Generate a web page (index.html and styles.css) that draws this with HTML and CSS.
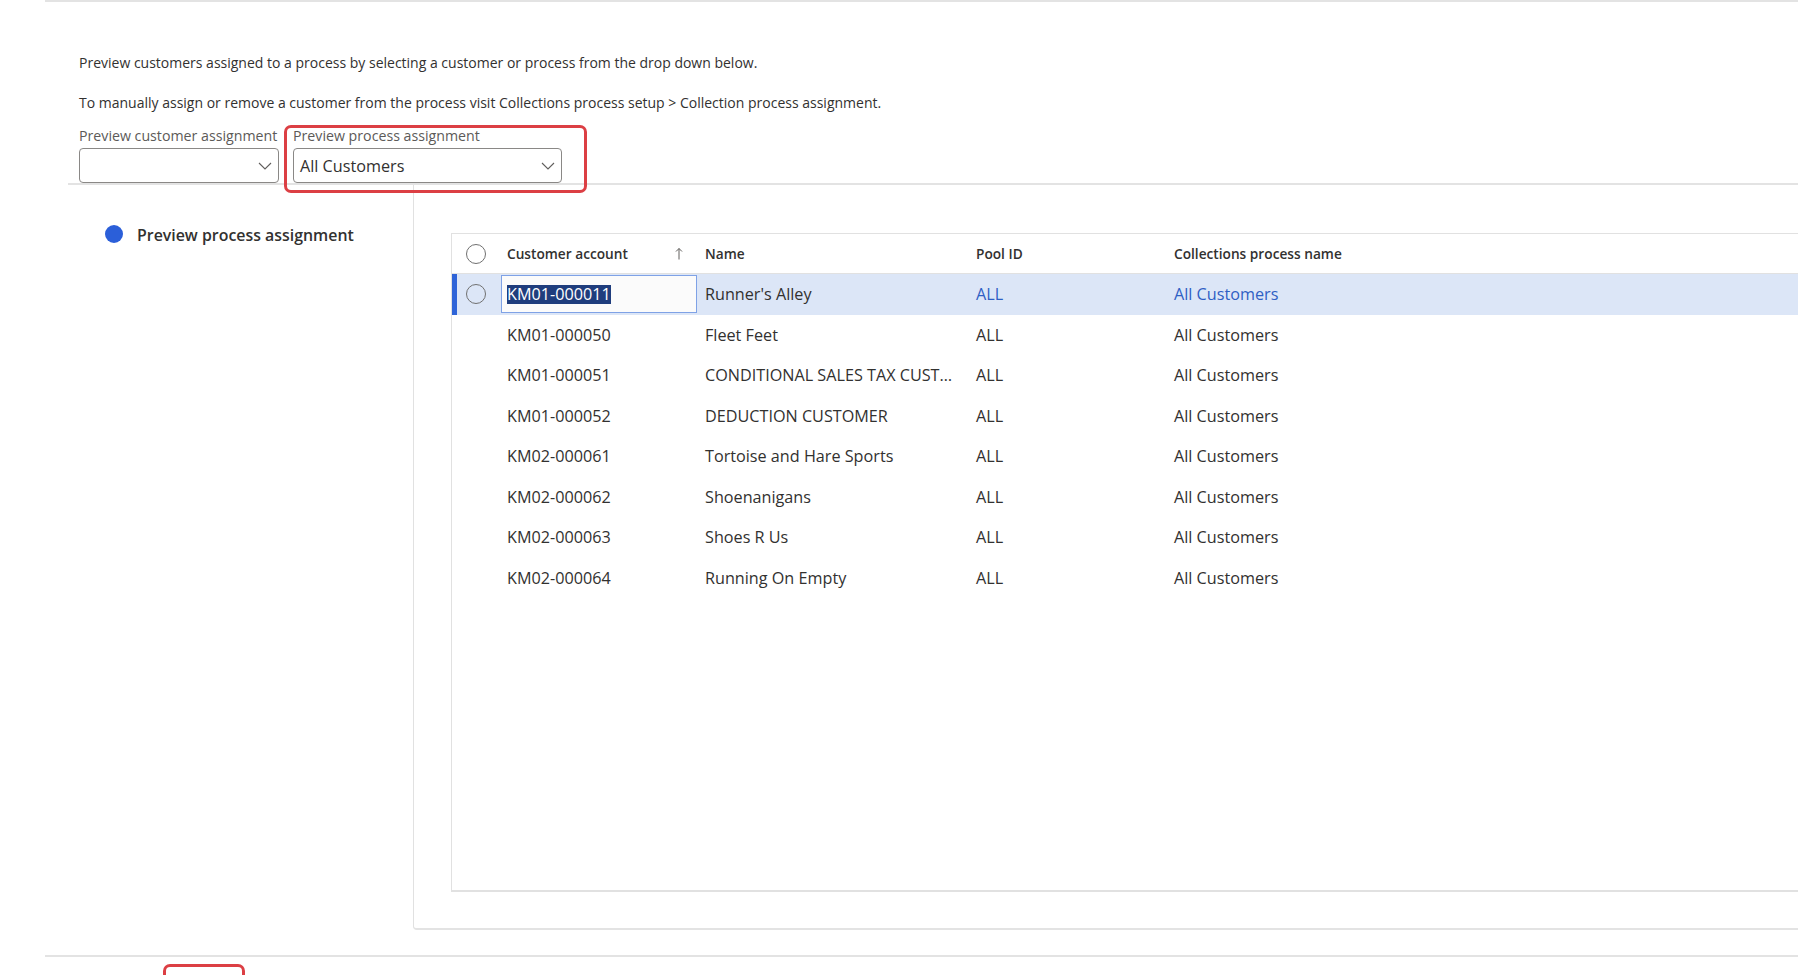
FILE: index.html
```html
<!DOCTYPE html>
<html lang="en">
<head>
  <meta charset="UTF-8" />
  <title>Collections process assignment</title>
  <link rel="stylesheet" href="styles.css">
</head>
<body>
  <div class="page">
    <section class="intro">
      <p>Preview customers assigned to a process by selecting a customer or process from the drop down below.</p>
      <p class="second">To manually assign or remove a customer from the process visit Collections process setup &gt; Collection process assignment.</p>

      <div class="filters">
        <div class="field field-customer">
          <label>Preview customer assignment</label>
          <div class="select">
            <span></span>
            <svg class="chevron" width="14" height="8" viewBox="0 0 14 8"><polyline points="1,1 7,7 13,1" fill="none" stroke="#605e5c" stroke-width="1.1"/></svg>
          </div>
        </div>
        <div class="field field-process highlighted">
          <label>Preview process assignment</label>
          <div class="select">
            <span>All Customers</span>
            <svg class="chevron" width="14" height="8" viewBox="0 0 14 8"><polyline points="1,1 7,7 13,1" fill="none" stroke="#605e5c" stroke-width="1.1"/></svg>
          </div>
        </div>
      </div>
    </section>

    <div class="workspace">
      <aside class="steps">
        <div class="step"><span class="dot"></span>Preview process assignment</div>
      </aside>

      <section class="panel">
        <div class="grid">
          <div class="row head">
            <div class="cell check"><span class="radio"></span></div>
            <div class="cell account">Customer account
              <svg class="sort" width="8" height="13" viewBox="0 0 8 13"><path d="M4 1.5V12.5M1 4.5L4 1.5L7 4.5" fill="none" stroke="#605e5c" stroke-width="1"/></svg>
            </div>
            <div class="cell name">Name</div>
            <div class="cell pool">Pool ID</div>
            <div class="cell process">Collections process name</div>
          </div>

          <div class="row selected">
            <div class="cell check"><span class="radio"></span></div>
            <div class="cell account"><div class="edit"><span class="mark">KM01-000011</span></div></div>
            <div class="cell name">Runner's Alley</div>
            <div class="cell pool link">ALL</div>
            <div class="cell process link">All Customers</div>
          </div>
          <div class="row">
            <div class="cell check"></div>
            <div class="cell account">KM01-000050</div>
            <div class="cell name">Fleet Feet</div>
            <div class="cell pool">ALL</div>
            <div class="cell process">All Customers</div>
          </div>
          <div class="row">
            <div class="cell check"></div>
            <div class="cell account">KM01-000051</div>
            <div class="cell name">CONDITIONAL SALES TAX CUSTOMER</div>
            <div class="cell pool">ALL</div>
            <div class="cell process">All Customers</div>
          </div>
          <div class="row">
            <div class="cell check"></div>
            <div class="cell account">KM01-000052</div>
            <div class="cell name">DEDUCTION CUSTOMER</div>
            <div class="cell pool">ALL</div>
            <div class="cell process">All Customers</div>
          </div>
          <div class="row">
            <div class="cell check"></div>
            <div class="cell account">KM02-000061</div>
            <div class="cell name">Tortoise and Hare Sports</div>
            <div class="cell pool">ALL</div>
            <div class="cell process">All Customers</div>
          </div>
          <div class="row">
            <div class="cell check"></div>
            <div class="cell account">KM02-000062</div>
            <div class="cell name">Shoenanigans</div>
            <div class="cell pool">ALL</div>
            <div class="cell process">All Customers</div>
          </div>
          <div class="row">
            <div class="cell check"></div>
            <div class="cell account">KM02-000063</div>
            <div class="cell name">Shoes R Us</div>
            <div class="cell pool">ALL</div>
            <div class="cell process">All Customers</div>
          </div>
          <div class="row">
            <div class="cell check"></div>
            <div class="cell account">KM02-000064</div>
            <div class="cell name">Running On Empty</div>
            <div class="cell pool">ALL</div>
            <div class="cell process">All Customers</div>
          </div>
        </div>
      </section>
    </div>

    <footer class="footer">
      <div class="footer-mark"></div>
    </footer>
  </div>
</body>
</html>
```

FILE: styles.css
```css
/* Base */
body {
  margin: 0;
  font-family: 'Open Sans', 'Noto Sans', sans-serif;
  color: #323130;
  background-color: #ffffff;
  overflow: hidden;
}

.page {
  margin-left: 45px;
  border-top: 2px solid #e3e3e3;
}

/* Intro + filters */
.intro {
  padding: 51px 0 0 34px;
}

.intro p {
  margin: 0;
  font-size: 14px;
  line-height: 20px;
  color: #323130;
  white-space: nowrap;
}

.intro p.second {
  margin-top: 20px;
}

.filters {
  display: flex;
  gap: 14px;
  margin-top: 14px;
}

.field {
  display: flex;
  flex-direction: column;
  gap: 3px;
}

.field label {
  font-size: 14.2px;
  line-height: 18px;
  color: #5c5a58;
  white-space: nowrap;
}

.field-customer .select {
  width: 200px;
}

.field-process .select {
  width: 269px;
}

.highlighted {
  position: relative;
}

.highlighted::after {
  content: '';
  position: absolute;
  top: -2px;
  left: -9px;
  right: -25px;
  bottom: -10px;
  border: 3px solid #dc3f44;
  border-radius: 7px;
}

.select {
  box-sizing: border-box;
  height: 35px;
  border: 1px solid #8a8886;
  border-radius: 4px;
  display: flex;
  align-items: center;
  justify-content: space-between;
  padding: 0 6px 0 6px;
  font-size: 16.2px;
  color: #323130;
}

/* Workspace */
.workspace {
  display: flex;
  margin-left: 23px;
  border-top: 2px solid #e3e3e3;
}

.steps {
  width: 345px;
  padding: 41px 0 0 37px;
  box-sizing: border-box;
}

.step {
  display: flex;
  align-items: center;
  gap: 14px;
  font-size: 15.9px;
  font-weight: 600;
  color: #323130;
  height: 18px;
  white-space: nowrap;
}

.step .dot {
  margin-top: -2px;
}

.dot {
  flex: none;
  width: 18px;
  height: 18px;
  border-radius: 50%;
  background-color: #2b5fd9;
}

.panel {
  flex: 1;
  border-left: 1px solid #e1e1e1;
  border-bottom: 2px solid #e3e3e3;
  border-bottom-left-radius: 4px;
  padding: 48px 0 36px 37px;
}

/* Grid */
.grid {
  height: 659px;
  box-sizing: border-box;
  border: 1px solid #e1e1e1;
  border-right: none;
  border-bottom-width: 2px;
}

.row {
  display: flex;
  height: 40.5px;
  align-items: center;
  font-size: 16.2px;
  color: #323130;
}

.row.head {
  height: 39px;
  border-bottom: 1px solid #e1e1e1;
  font-size: 13.7px;
  font-weight: 600;
}

.row.selected {
  background-color: #dce6f7;
  box-shadow: inset 5px 0 0 #2f64d8;
}

.cell {
  box-sizing: border-box;
  white-space: nowrap;
  overflow: hidden;
  text-overflow: ellipsis;
  padding-left: 7px;
}

.cell.check {
  width: 48px;
  padding-left: 0;
  display: flex;
  justify-content: center;
}

.cell.account {
  width: 198px;
}

.head .cell.account {
  display: flex;
  justify-content: space-between;
  align-items: center;
  padding-right: 15px;
}

.cell.name {
  width: 270px;
  padding-right: 8px;
}

.cell.pool {
  width: 198px;
  padding-left: 8px;
}

.cell.process {
  flex: 1;
  padding-left: 8px;
}

.cell.link {
  color: #2f5fc4;
}

.radio {
  width: 18px;
  height: 18px;
  border: 1px solid #707070;
  border-radius: 50%;
}

.selected .cell.account {
  padding-left: 1px;
}

.edit {
  box-sizing: border-box;
  width: 196px;
  height: 38px;
  border: 1px solid #7fa2e6;
  background-color: #fbfbfb;
  display: flex;
  align-items: center;
  padding-left: 5px;
}

.mark {
  background-color: #1f3d7d;
  color: #ffffff;
  line-height: 19px;
}

/* Footer */
.footer {
  margin-top: 25px;
  border-top: 2px solid #e3e3e3;
  padding: 7px 0 0 118px;
}

.footer-mark {
  width: 82px;
  height: 30px;
  box-sizing: border-box;
  border: 3px solid #dc3f44;
  border-radius: 7px;
}
```
